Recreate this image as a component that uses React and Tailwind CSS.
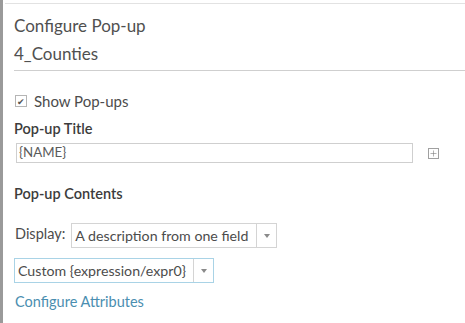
import { Plus } from 'lucide-react'

const font = { fontFamily: 'Lato, "Noto Sans", sans-serif' }

const Select = ({ label, width, blue }) => (
  <div
    className={`flex items-stretch h-[25px] border bg-white ${blue ? 'border-[#a9d3e6]' : 'border-[#d4d4d4]'}`}
    style={{ width }}
  >
    <div className="flex-1 flex items-center px-[3px] text-[14.2px] text-[#4c4c4c] whitespace-nowrap">{label}</div>
    <div className="w-[20px] flex items-center justify-center border-l border-[#d4d4d4]">
      <span className="block w-0 h-0 border-l-[3px] border-r-[3px] border-t-[4px] border-l-transparent border-r-transparent border-t-[#8a8a8a]" />
    </div>
  </div>
)

export default function App() {
  return (
    <div className="w-[465px] h-[323px] bg-white flex overflow-hidden" style={font}>
      <div className="w-[3px] bg-[#9a9a9a] shrink-0" />
      <div className="flex-1 flex flex-col">
        <div className="h-[3px] mt-[3px] ml-[2px] border-t border-[#e2e2e2]" />
        <div className="pl-[11px]">
          <div className="text-[17px] text-[#505050] mt-[10px] leading-[20px]">Configure Pop-up</div>
          <div className="text-[17px] text-[#505050] mt-[8px] leading-[20px] pb-[6px] border-b border-[#cfcfcf]">4_Counties</div>

          <div className="flex items-center gap-[7px] mt-[21px] h-[18px]">
            <span className="w-[12px] h-[12px] border border-[#b5b5b5] flex items-center justify-center text-[9px] leading-none text-[#555] ml-[1px]">✔</span>
            <span className="text-[15px] leading-[18px] text-[#4c4c4c]">Show Pop-ups</span>
          </div>

          <div className="text-[14.5px] font-semibold text-[#3c3c3c] mt-[10px] leading-[18px]">Pop-up Title</div>
          <div className="flex items-center mt-[5px]">
            <div className="w-[397px] h-[20px] border border-[#cfcfcf] flex items-center px-[2px] text-[13.3px] text-[#5a5a5a] ml-[2px]">{'{NAME}'}</div>
            <span className="ml-[15px] w-[11px] h-[11px] border border-[#a0a0a0] flex items-center justify-center text-[#777]">
              <Plus size={9} strokeWidth={1.5} />
            </span>
          </div>

          <div className="text-[14.5px] font-semibold text-[#3c3c3c] mt-[22px] leading-[18px]">Pop-up Contents</div>

          <div className="flex items-center mt-[20px]">
            <span className="text-[14.5px] text-[#4c4c4c] mr-[6px] -mt-[3px] ml-[1px]">Display:</span>
            <Select label="A description from one field" width={206} />
          </div>
          <div className="mt-[10px]">
            <Select label="Custom {expression/expr0}" width={200} blue />
          </div>
          <div className="text-[14.5px] text-[#4a8eb0] mt-[10px] leading-[18px] ml-[1px]">Configure Attributes</div>
        </div>
      </div>
    </div>
  )
}
